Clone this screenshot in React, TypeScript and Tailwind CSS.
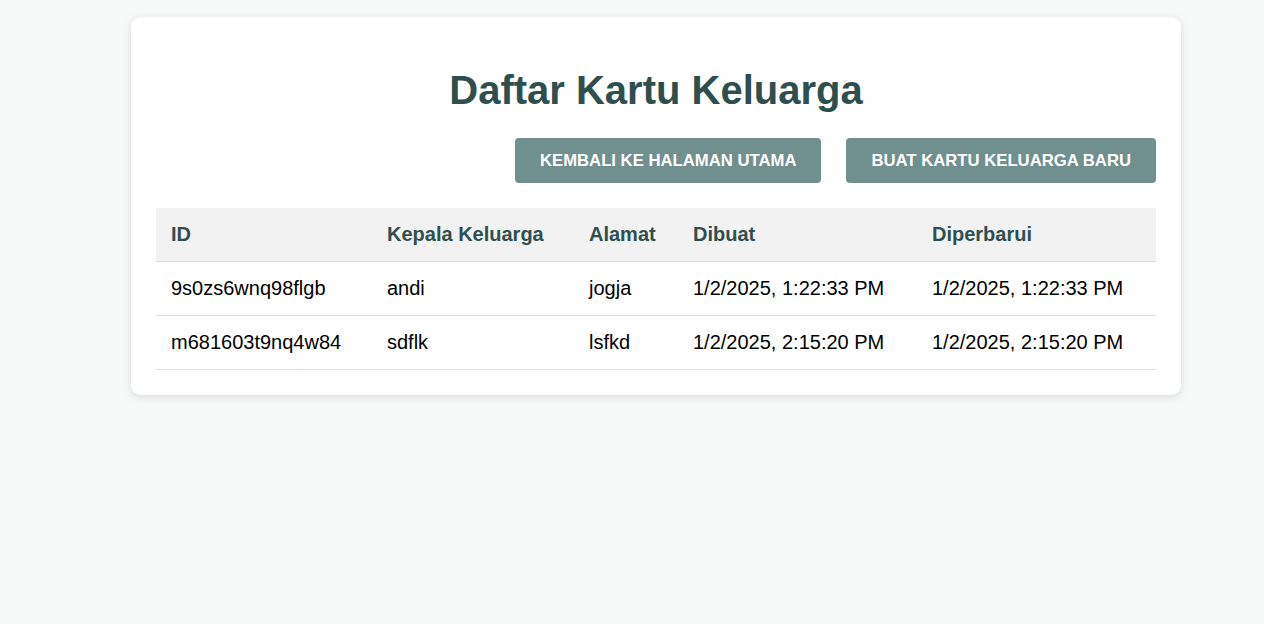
export default function App() {
  const rows = [
    ["9s0zs6wnq98flgb", "andi", "jogja", "1/2/2025, 1:22:33 PM", "1/2/2025, 1:22:33 PM"],
    ["m681603t9nq4w84", "sdflk", "lsfkd", "1/2/2025, 2:15:20 PM", "1/2/2025, 2:15:20 PM"],
  ];
  const widths = ["w-[216px]", "w-[202px]", "w-[104px]", "w-[239px]", "w-[239px]"];
  const heads = ["ID", "Kepala Keluarga", "Alamat", "Dibuat", "Diperbarui"];
  return (
    <div className="min-h-[624px] bg-[#f7f9f8] pt-[17px] font-['Liberation_Sans',Arial,sans-serif]">
      <div className="ml-[131px] w-[1050px] rounded-[10px] bg-white px-[25px] pt-[50px] pb-[25px] shadow-[0_2px_8px_rgba(0,0,0,0.12)]">
        <h1 className="text-center text-[40px] font-bold leading-[46px] text-[#2f4f4f]">Daftar Kartu Keluarga</h1>
        <div className="mt-[25px] flex justify-end gap-[25px]">
          <button className="h-[45px] rounded-[4px] bg-[#6f908e] px-[25px] text-[16.7px] font-bold uppercase text-white">
            Kembali ke Halaman Utama
          </button>
          <button className="h-[45px] rounded-[4px] bg-[#6f908e] px-[25px] text-[16.7px] font-bold uppercase text-white">
            Buat Kartu Keluarga Baru
          </button>
        </div>
        <table className="mt-[25px] w-full table-fixed border-collapse text-left text-[20px] leading-[23px]">
          <thead>
            <tr className="bg-[#f2f2f2]">
              {heads.map((h, i) => (
                <th key={h} className={`${widths[i]} border-b border-[#dddddd] px-[15px] py-[15px] font-bold text-[#2f4f4f]`}>
                  {h}
                </th>
              ))}
            </tr>
          </thead>
          <tbody>
            {rows.map((r) => (
              <tr key={r[0]}>
                {r.map((c, i) => (
                  <td key={i} className="border-b border-[#dddddd] px-[15px] py-[15px] text-black">
                    {c}
                  </td>
                ))}
              </tr>
            ))}
          </tbody>
        </table>
      </div>
    </div>
  );
}
